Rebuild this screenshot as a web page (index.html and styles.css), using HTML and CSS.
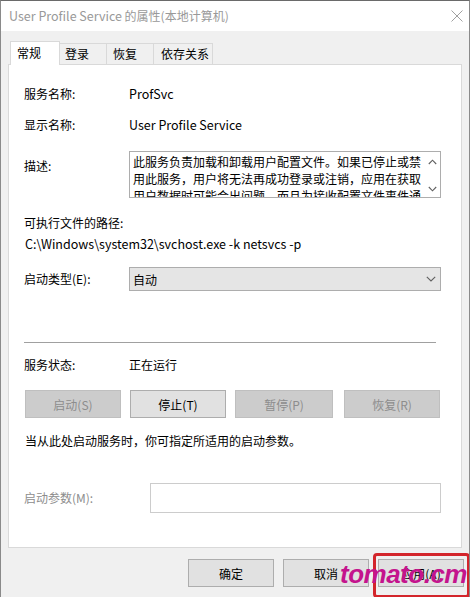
FILE: index.html
```html
<!DOCTYPE html>
<html lang="zh-CN">
<head>
<meta charset="utf-8">
<title>User Profile Service 的属性(本地计算机)</title>
<link rel="stylesheet" href="styles.css">
</head>
<body>
<div class="window">
  <div class="titlebar">
    <span class="title"><span class="latin">User Profile Service</span> 的属性(本地计算机)</span>
    <svg class="close" width="12" height="12" viewBox="0 0 12 12"><path d="M0.5 0.5 L11.5 11.5 M11.5 0.5 L0.5 11.5" stroke="#a0a0a0" stroke-width="1" fill="none"/></svg>
  </div>
  <div class="body">
    <div class="tabs">
      <div class="tab tab-active t1">常规</div>
      <div class="tab t2">登录</div>
      <div class="tab t3">恢复</div>
      <div class="tab t4">依存关系</div>
    </div>
    <div class="panel">
      <div class="row r1"><span class="label">服务名称:</span><span class="value latin">ProfSvc</span></div>
      <div class="row r2"><span class="label">显示名称:</span><span class="value latin">User Profile Service</span></div>
      <div class="row r3">
        <span class="label label-desc">描述:</span>
        <div class="descbox">
          <div class="desctext">此服务负责加载和卸载用户配置文件。如果已停止或禁用此服务，用户将无法再成功登录或注销，应用在获取用户数据时可能会出问题，而且为接收配置文件事件通知注册的组件将无法接收这些通知。</div>
          <div class="scroll">
            <svg width="9" height="6" viewBox="0 0 9 6"><path d="M0.8 5 L4.5 1.2 L8.2 5" stroke="#606060" stroke-width="1.1" fill="none"/></svg>
            <svg width="9" height="6" viewBox="0 0 9 6"><path d="M0.8 1 L4.5 4.8 L8.2 1" stroke="#606060" stroke-width="1.1" fill="none"/></svg>
          </div>
        </div>
      </div>
      <div class="line path-label">可执行文件的路径:</div>
      <div class="line path-value latin">C:\Windows\system32\svchost.exe -k netsvcs -p</div>
      <div class="row r4">
        <span class="label">启动类型(E):</span>
        <div class="select">
          <span>自动</span>
          <svg width="10" height="6" viewBox="0 0 10 6"><path d="M0.8 0.8 L5 5 L9.2 0.8" stroke="#606060" stroke-width="1.1" fill="none"/></svg>
        </div>
      </div>
      <div class="sep"></div>
      <div class="row r5"><span class="label">服务状态:</span><span class="value">正在运行</span></div>
      <div class="btnrow">
        <div class="btn btn-disabled b1">启动(S)</div>
        <div class="btn b2">停止(T)</div>
        <div class="btn btn-disabled b3">暂停(P)</div>
        <div class="btn btn-disabled b4">恢复(R)</div>
      </div>
      <div class="line note">当从此处启动服务时，你可指定所适用的启动参数。</div>
      <div class="row r6">
        <span class="label label-disabled">启动参数(M):</span>
        <div class="input"></div>
      </div>
    </div>
    <div class="footer">
      <div class="btn fbtn">确定</div>
      <div class="btn fbtn">取消</div>
      <div class="btn fbtn">应用(A)</div>
    </div>
  </div>
  <div class="mark mark-startup"></div>
  <div class="mark mark-apply"></div>
  <div class="watermark">tomato.cm</div>
</div>
</body>
</html>
```

FILE: styles.css
```css
* { box-sizing: border-box; }
html, body { margin: 0; padding: 0; background: #ffffff; }
body {
  font-family: "Microsoft YaHei", "Noto Sans CJK SC", sans-serif;
  font-size: 12px;
  color: #000;
}
.latin { font-size: 12.5px; }
.window {
  position: relative;
  width: 470px;
  height: 597px;
  border-top: 1px solid #6a6a6a;
  border-left: 1px solid #8a8a8a;
  border-right: 1px solid #8a8a8a;
  background: #f0f0f0;
  overflow: hidden;
}
.titlebar {
  height: 30px;
  background: #fff;
  display: flex;
  align-items: center;
  justify-content: space-between;
  padding: 0 6px 0 8px;
}
.title { color: #999; line-height: 20px; margin-top: -1px; }
.close { margin-top: 0; }
.body { padding-top: 10px; }
.tabs {
  display: flex;
  align-items: flex-end;
  height: 23px;
  margin-left: 9px;
  position: relative;
  z-index: 2;
}
.tab {
  height: 21px;
  line-height: 19px;
  border: 1px solid #d9d9d9;
  border-bottom: none;
  background: #f0f0f0;
  margin-left: -1px;
}
.tab-active {
  height: 24px;
  margin-bottom: -1px;
  background: #fff;
  line-height: 21px;
  margin-left: 0;
}
.t1 { width: 50px; padding-left: 6px; }
.t2 { width: 48px; padding-left: 5px; }
.t3 { width: 48px; padding-left: 6px; }
.t4 { width: 60px; padding-left: 7px; }
.panel {
  margin-left: 7px;
  width: 454px;
  height: 484px;
  background: #fff;
  border: 1px solid #d9d9d9;
  padding: 19px 20px 0 15px;
  position: relative;
  z-index: 1;
}
.row { display: flex; align-items: flex-start; }
.label { width: 105px; flex: none; line-height: 20px; }
.value { line-height: 20px; }
.r2 { margin-top: 11px; }
.r3 { margin-top: 16px; }
.label-desc { padding-top: 5px; }
.descbox {
  width: 312px;
  height: 47px;
  border: 1px solid #adadad;
  display: flex;
  overflow: hidden;
}
.desctext {
  width: 294px;
  padding: 1px 0 0 3px;
  line-height: 17px;
  overflow: hidden;
  height: 45px;
}
.scroll {
  flex: 1;
  display: flex;
  flex-direction: column;
  justify-content: space-between;
  align-items: center;
  padding: 7px 0 5px 0;
}
.line { line-height: 20px; }
.path-label { margin-top: 15px; }
.path-value { margin-top: 1px; padding-left: 1px; }
.r4 { margin-top: 13px; align-items: center; }
.select {
  width: 312px;
  height: 24px;
  background: #e5e5e5;
  border: 1px solid #adadad;
  display: flex;
  align-items: center;
  justify-content: space-between;
  padding: 0 4px 0 3px;
}
.sep {
  margin-top: 51px;
  width: 412px;
  height: 1px;
  background: #a0a0a0;
}
.r5 { margin-top: 12px; }
.btnrow { display: flex; margin-top: 15px; padding-left: 1px; }
.btn {
  height: 28px;
  display: flex;
  align-items: center;
  justify-content: center;
  background: #e1e1e1;
  border: 1px solid #adadad;
}
.btn-disabled { background: #cccccc; border-color: #bfbfbf; color: #8d8d8d; }
.b1 { width: 96px; }
.b2 { width: 96px; margin-left: 9px; }
.b3 { width: 98px; margin-left: 9px; }
.b4 { width: 96px; margin-left: 11px; }
.note { margin-top: 13px; padding-left: 1px; }
.r6 { margin-top: 32px; align-items: center; }
.label-disabled { color: #8d8d8d; width: 126px; }
.input {
  width: 291px;
  height: 30px;
  border: 1px solid #cccccc;
  background: #fff;
}
.footer {
  display: flex;
  justify-content: flex-end;
  gap: 9px;
  margin-top: 11px;
  padding-right: 5px;
}
.fbtn { width: 86px; height: 28px; }
.mark {
  position: absolute;
  border: 3px solid #d3252b;
  border-radius: 4px;
}
.mark-startup { left: 105px; top: 252px; width: 344px; height: 59px; }
.mark-apply { left: 372px; top: 552px; width: 97px; height: 45px; }
.watermark {
  position: absolute;
  left: 339px;
  top: 556px;
  font-family: "Liberation Sans", Arial, sans-serif;
  font-weight: bold;
  font-style: italic;
  font-size: 26px;
  letter-spacing: -0.5px;
  line-height: 34px;
  color: #c4148d;
}
```
